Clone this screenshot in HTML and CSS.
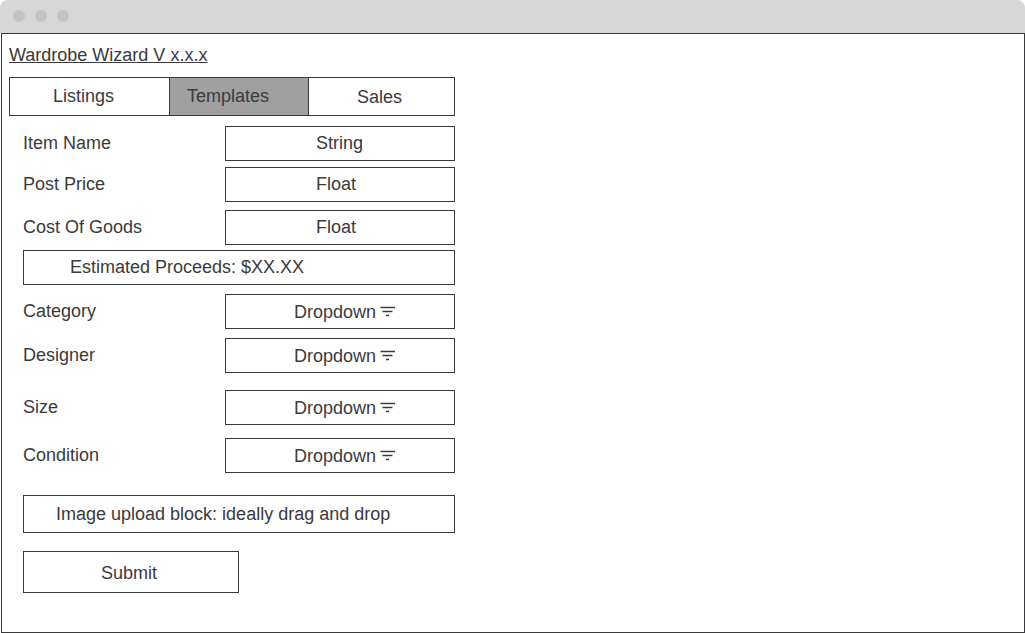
FILE: index.html
```html
<!DOCTYPE html>
<html lang="en">
<head>
<meta charset="utf-8">
<meta name="viewport" content="width=device-width, initial-scale=1">
<title>Wardrobe Wizard</title>
<link rel="stylesheet" href="styles.css">
</head>
<body>
<div class="titlebar"><span class="dot"></span><span class="dot"></span><span class="dot"></span></div>
<main class="window">
  <div class="panel">
    <h1 class="title">Wardrobe Wizard V x.x.x</h1>
    <nav class="tabs">
      <button type="button" class="tab tab-listings">Listings</button>
      <button type="button" class="tab tab-templates" aria-current="page">Templates</button>
      <button type="button" class="tab tab-sales">Sales</button>
    </nav>
    <form class="form">
      <div class="row">
        <label class="label" for="name">Item Name</label>
        <input class="box text" id="name" type="text" value="String">
      </div>
      <div class="row gap-s">
        <label class="label" for="price">Post Price</label>
        <input class="box text" id="price" type="text" value="Float">
      </div>
      <div class="row gap-m">
        <label class="label" for="cost">Cost Of Goods</label>
        <input class="box text" id="cost" type="text" value="Float">
      </div>
      <output class="box proceeds" for="price cost">Estimated Proceeds: $XX.XX</output>
      <div class="row gap-l">
        <label class="label" for="category">Category</label>
        <div class="picker">
          <select class="box select" id="category"><option>Dropdown</option></select>
          <svg class="icon" viewBox="0 0 16 12" aria-hidden="true"><path d="M0.500 2.500H15M2.500 6.500H12.500M6 10.500H9"/></svg>
        </div>
      </div>
      <div class="row gap-l">
        <label class="label" for="designer">Designer</label>
        <div class="picker">
          <select class="box select" id="designer"><option>Dropdown</option></select>
          <svg class="icon" viewBox="0 0 16 12" aria-hidden="true"><path d="M0.500 2.500H15M2.500 6.500H12.500M6 10.500H9"/></svg>
        </div>
      </div>
      <div class="row gap-xxl">
        <label class="label" for="size">Size</label>
        <div class="picker">
          <select class="box select" id="size"><option>Dropdown</option></select>
          <svg class="icon" viewBox="0 0 16 12" aria-hidden="true"><path d="M0.500 2.500H15M2.500 6.500H12.500M6 10.500H9"/></svg>
        </div>
      </div>
      <div class="row gap-xl">
        <label class="label" for="condition">Condition</label>
        <div class="picker">
          <select class="box select" id="condition"><option>Dropdown</option></select>
          <svg class="icon" viewBox="0 0 16 12" aria-hidden="true"><path d="M0.500 2.500H15M2.500 6.500H12.500M6 10.500H9"/></svg>
        </div>
      </div>
      <button type="button" class="box upload">Image upload block: ideally drag and drop</button>
      <button type="submit" class="box submit">Submit</button>
    </form>
  </div>
</main>
</body>
</html>
```

FILE: styles.css
```css
* {
  box-sizing: border-box;
}

body {
  margin: 0;
  min-height: 100vh;
  display: flex;
  flex-direction: column;
  background: #fff;
  color: #3a3a3c;
  font: 18px/24px "Liberation Sans", Arial, sans-serif;
}

button,
input,
select {
  margin: 0;
  font: inherit;
  color: inherit;
}

.titlebar {
  display: flex;
  align-items: center;
  gap: 10px;
  height: 33px;
  padding: 0 13px 1px;
  border-radius: 8px 8px 0 0;
  background: #d7d7d7;
}

.dot {
  width: 12px;
  height: 12px;
  border-radius: 50%;
  background: #c2c2c2;
}

.window {
  flex: 1;
  margin-left: 1px;
  padding: 9px 7px 39px;
  border: 1px solid #3a3a3c;
}

.panel {
  max-width: 446px;
}

.title {
  margin: 0 0 10px;
  font-size: 18px;
  font-weight: 400;
  text-decoration: underline;
  text-decoration-thickness: 1px;
  text-underline-offset: 1px;
}

.tabs {
  display: grid;
  grid-template-columns: 159fr 140fr 145fr;
  border: 1px solid #3a3a3c;
}

.tab {
  height: 37px;
  padding: 0;
  border: 0;
  background: none;
  text-align: left;
}

.tab-listings {
  padding: 0 0 2px 43px;
}

.tab-templates {
  padding: 0 0 2px 17px;
  border: solid #3a3a3c;
  border-width: 0 1px;
  background: #a0a0a0;
}

.tab-sales {
  padding-left: 48px;
}

.form {
  display: flex;
  flex-direction: column;
  margin-top: 10px;
  padding-left: 14px;
}

.row {
  display: grid;
  grid-template-columns: 202fr 230fr;
  align-items: center;
}

.label {
  padding-bottom: 2px;
}

.gap-s {
  margin-top: 6px;
}

.gap-m {
  margin-top: 8px;
}

.gap-l {
  margin-top: 9px;
}

.gap-xl {
  margin-top: 13px;
}

.gap-xxl {
  margin-top: 17px;
}

.box {
  width: 100%;
  height: 35px;
  padding: 0;
  border: 1px solid #3a3a3c;
  border-radius: 0;
  background: #fff;
  text-align: left;
}

.text {
  padding-left: 90px;
}

.proceeds {
  display: flex;
  align-items: center;
  margin-top: 5px;
  padding: 0 0 2px 46px;
}

.picker {
  position: relative;
}

.select {
  display: block;
  appearance: none;
  padding-left: 68px;
}

.icon {
  position: absolute;
  left: 155px;
  top: 11px;
  width: 16px;
  height: 12px;
  fill: none;
  stroke: #3a3a3c;
  stroke-width: 1.500;
  pointer-events: none;
}

.upload {
  height: 38px;
  margin-top: 22px;
  padding-left: 32px;
}

.submit {
  width: 50%;
  height: 42px;
  margin-top: 18px;
  padding: 2px 0 0 77px;
}
```
